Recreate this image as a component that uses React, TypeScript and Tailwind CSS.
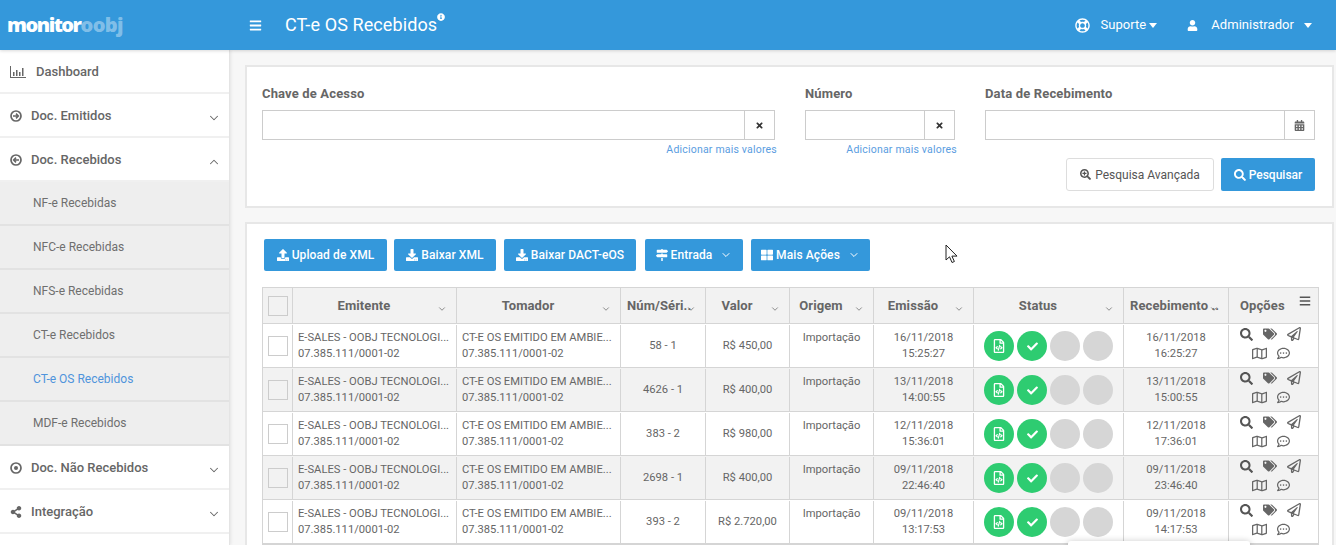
import { ReactNode } from "react";
import {
  FaBars,
  FaCalendarAlt,
  FaCheck,
  FaDownload,
  FaInfoCircle,
  FaMapSigns,
  FaRegCommentDots,
  FaRegFileCode,
  FaRegLifeRing,
  FaRegMap,
  FaRegPaperPlane,
  FaSearch,
  FaSearchPlus,
  FaShareAlt,
  FaTags,
  FaThLarge,
  FaTimes,
  FaUpload,
  FaUser,
} from "react-icons/fa";
import { FiChevronDown, FiChevronUp } from "react-icons/fi";

const gridCols = "grid grid-cols-[29px_164px_164px_85px_84px_84px_100px_150px_105px_90px]";

const subItems = [
  "NF-e Recebidas",
  "NFC-e Recebidas",
  "NFS-e Recebidas",
  "CT-e Recebidos",
  "CT-e OS Recebidos",
  "MDF-e Recebidos",
];

const rows = [
  { num: "58 - 1", valor: "R$ 450,00", em: ["16/11/2018", "15:25:27"], rec: ["16/11/2018", "16:25:27"] },
  { num: "4626 - 1", valor: "R$ 400,00", em: ["13/11/2018", "14:00:55"], rec: ["13/11/2018", "15:00:55"] },
  { num: "383 - 2", valor: "R$ 980,00", em: ["12/11/2018", "15:36:01"], rec: ["12/11/2018", "17:36:01"] },
  { num: "2698 - 1", valor: "R$ 400,00", em: ["09/11/2018", "22:46:40"], rec: ["09/11/2018", "23:46:40"] },
  { num: "393 - 2", valor: "R$ 2.720,00", em: ["09/11/2018", "13:17:53"], rec: ["09/11/2018", "14:17:53"] },
];

function CircleIcon({ children }: { children: ReactNode }) {
  return (
    <svg width="12" height="12" viewBox="0 0 12 12" fill="none" stroke="#666">
      <circle cx="6" cy="6" r="5" strokeWidth="1.7" />
      {children}
    </svg>
  );
}

function NavItem({ icon, label, open }: { icon: ReactNode; label: string; open?: boolean }) {
  return (
    <div className="flex h-11 items-center border-b-2 border-[#f0f0f0] pl-[10px] pr-[8px] pt-[2px] text-[13px] font-medium text-[#666]">
      <span className="w-[21px]">{icon}</span>
      <span className="flex-1">{label}</span>
      {open ? (
        <FiChevronUp strokeWidth={1.8} className="mt-1 text-[14px]" />
      ) : (
        <FiChevronDown strokeWidth={1.8} className="mt-1 text-[14px]" />
      )}
    </div>
  );
}

function Sidebar() {
  return (
    <aside className="w-[230px] shrink-0 border-r border-[#e4e4e4] bg-white shadow-[1px_0_3px_rgba(0,0,0,0.08)]">
      <div className="flex h-11 items-center border-b-2 border-[#f0f0f0] pl-[10px] pt-[2px] text-[13px] font-medium text-[#666]">
        <svg className="mr-[10px]" width="16" height="12" viewBox="0 0 16 12" fill="#666">
          <path d="M0 0h1v11h15v1H0z" />
          <path d="M3 6h1.5v4H3zM6 4h1.5v6H6zM9 6h1.5v4H9zM12 2h1.5v8H12z" />
        </svg>
        <span>Dashboard</span>
      </div>
      <NavItem
        icon={
          <CircleIcon>
            <path d="M3 6h5M6 3.6 8.4 6 6 8.4" strokeWidth="1.5" />
          </CircleIcon>
        }
        label="Doc. Emitidos"
      />
      <NavItem
        icon={
          <CircleIcon>
            <path d="M9 6H4M6 3.6 3.6 6 6 8.4" strokeWidth="1.5" />
          </CircleIcon>
        }
        label="Doc. Recebidos"
        open
      />
      {subItems.map((item) => (
        <div
          key={item}
          className={`flex h-11 items-center border-b-2 border-[#e2e2e2] bg-[#eeeeee] pl-[33px] text-[12px] ${
            item === "CT-e OS Recebidos" ? "text-[#4f94dc]" : "text-[#6f6f6f]"
          }`}
        >
          {item}
        </div>
      ))}
      <NavItem
        icon={
          <CircleIcon>
            <circle cx="6" cy="6" r="2" fill="#666" stroke="none" />
          </CircleIcon>
        }
        label="Doc. Não Recebidos"
      />
      <NavItem icon={<FaShareAlt className="text-[12px]" />} label="Integração" />
    </aside>
  );
}

function Header() {
  return (
    <header className="relative z-10 flex h-[50px] items-center bg-[#3498db] text-white shadow-[0_1px_3px_rgba(0,0,0,0.15)]">
      <div className="w-[249px] pl-[7px] text-[20px] font-extrabold leading-none tracking-[-1.5px] font-['Open_Sans',sans-serif]">
        monitor<span className="tracking-[-0.6px] text-white/40">oobj</span>
      </div>
      <FaBars className="text-[13px]" />
      <div className="ml-[23px] flex flex-1 items-start pb-[2px] text-[18px] tracking-[0.1px]">
        CT-e OS Recebidos
        <FaInfoCircle className="mt-[2px] text-[8px]" />
      </div>
      <div className="flex items-center text-[13px] tracking-[0.05px]">
        <FaRegLifeRing className="mr-[10px] text-[15px]" />
        Suporte
        <span className="ml-[3px] border-x-[4.5px] border-t-[5px] border-x-transparent border-t-white" />
        <FaUser className="ml-[30px] mr-[13px] text-[11px]" />
        Administrador
        <span className="ml-[10px] mr-[24px] border-x-[4.5px] border-t-[5px] border-x-transparent border-t-white" />
      </div>
    </header>
  );
}

function FilterInput({ label, width, hint }: { label: string; width: string; hint?: boolean }) {
  return (
    <div className={width}>
      <label className="mb-2 block text-[13px] font-bold leading-[17px] tracking-[0.15px] text-[#666]">{label}</label>
      <div className="flex h-[30px] border border-[#ccc] bg-white">
        <div className="flex-1" />
        <div className="flex w-[30px] items-center justify-center border-l border-[#ccc] text-[9px] text-[#333]">
          {hint ? <FaTimes /> : <FaCalendarAlt className="text-[11px] text-[#666]" />}
        </div>
      </div>
      {hint && (
        <div className="-mr-[2px] mt-[3px] text-right text-[10.5px] leading-[14px] tracking-[0.2px] text-[#5a9ddf]">
          Adicionar mais valores
        </div>
      )}
    </div>
  );
}

function FilterPanel() {
  return (
    <section className="h-[143px] border-2 border-[#e7e7e7] bg-white pl-[15px] pr-[17px] pt-[18px]">
      <div className="flex gap-[30px]">
        <FilterInput label="Chave de Acesso" width="w-[513px]" hint />
        <FilterInput label="Número" width="w-[150px]" hint />
        <FilterInput label="Data de Recebimento" width="w-[330px]" />
      </div>
      <div className="mt-[1px] flex justify-end gap-[7px]">
        <button className="flex h-[33px] w-[148px] items-center justify-center gap-1 rounded-[3px] border border-[#ddd] bg-white text-[12px] text-[#555]">
          <FaSearchPlus className="text-[11px]" /> Pesquisa Avançada
        </button>
        <button className="flex h-[33px] w-[94px] items-center justify-center gap-[3px] rounded-[2px] bg-[#3498db] text-[12px] font-medium text-white">
          <FaSearch className="text-[12px]" /> Pesquisar
        </button>
      </div>
    </section>
  );
}

function ActionButton({ icon, label, className, caret }: { icon: ReactNode; label: string; className: string; caret?: boolean }) {
  return (
    <button className={`flex h-8 items-center justify-center gap-[3px] rounded-[2px] bg-[#3498db] text-[12px] font-medium tracking-[0.1px] text-white ${className}`}>
      <span className="text-[12px]">{icon}</span>
      {label}
      {caret && <FiChevronDown className="ml-[5px] text-[12px]" />}
    </button>
  );
}

function Checkbox() {
  return <div className="h-5 w-5 border border-[#ccc]" />;
}

function HeaderCell({ label, wide }: { label: string; wide?: boolean }) {
  return (
    <div className="relative flex items-center border-l border-[#d5d5d5] text-[13px] font-bold tracking-[0.1px] text-[#666]">
      {wide ? (
        <span className="whitespace-nowrap pl-[6px]">{label}</span>
      ) : (
        <span className="w-full pl-[5px] pr-[26px] text-center">{label}</span>
      )}
      <FiChevronDown className="absolute right-[9px] top-[16px] text-[10px] text-[#777]" />
    </div>
  );
}

function StatusDot({ children }: { children?: ReactNode }) {
  return (
    <div
      className={`flex h-[30px] w-[30px] items-center justify-center rounded-full text-white ${
        children ? "bg-[#2ecc71]" : "bg-[#d6d6d6]"
      }`}
    >
      {children}
    </div>
  );
}

function Row({ row, striped }: { row: (typeof rows)[number]; striped: boolean }) {
  const cell = "flex flex-col items-center justify-center border-l border-[#d5d5d5] leading-4";
  return (
    <div className={`${gridCols} h-11 border-b border-[#d5d5d5] pt-px text-[11.2px] text-[#666] ${striped ? "bg-[#f2f2f2]" : "bg-white"}`}>
      <div className="flex items-center justify-center">
        <Checkbox />
      </div>
      {["E-SALES - OOBJ TECNOLOGI...", "CT-E OS EMITIDO EM AMBIE..."].map((name) => (
        <div key={name} className="flex flex-col justify-center border-l border-[#d5d5d5] pl-[5px] leading-4">
          <span className="whitespace-nowrap">{name}</span>
          <span>07.385.111/0001-02</span>
        </div>
      ))}
      <div className={cell}>{row.num}</div>
      <div className={cell}>{row.valor}</div>
      <div className="border-l border-[#d5d5d5] pt-[5px] text-center leading-4">Importação</div>
      <div className={cell}>
        <span>{row.em[0]}</span>
        <span>{row.em[1]}</span>
      </div>
      <div className="flex items-center justify-center gap-[3px] border-l border-[#d5d5d5]">
        <StatusDot>
          <FaRegFileCode className="text-[14px]" />
        </StatusDot>
        <StatusDot>
          <FaCheck className="text-[11px]" />
        </StatusDot>
        <StatusDot />
        <StatusDot />
      </div>
      <div className={cell}>
        <span>{row.rec[0]}</span>
        <span>{row.rec[1]}</span>
      </div>
      <div className="flex flex-col items-center gap-[5px] border-l border-[#d5d5d5] pr-[6px] pt-[2px] text-[14px] text-[#666]">
        <div className="flex items-center gap-[10px]">
          <FaSearch className="text-[13px] text-[#555]" />
          <FaTags />
          <FaRegPaperPlane />
        </div>
        <div className="flex items-center gap-[10px]">
          <FaRegMap className="text-[15px]" />
          <FaRegCommentDots className="text-[13px]" />
        </div>
      </div>
    </div>
  );
}

function TablePanel() {
  return (
    <section className="mt-[14px] border-2 border-b-0 border-[#e7e7e7] bg-white pl-[15px] pr-[13px] pt-[15px]">
      <div className="flex">
        <ActionButton icon={<FaUpload />} label="Upload de XML" className="ml-[2px] w-[123px]" />
        <ActionButton icon={<FaDownload />} label="Baixar XML" className="ml-[7px] w-[102px]" />
        <ActionButton icon={<FaDownload />} label="Baixar DACT-eOS" className="ml-2 w-[132px]" />
        <ActionButton icon={<FaMapSigns />} label="Entrada" className="ml-[9px] w-[98px]" caret />
        <ActionButton icon={<FaThLarge />} label="Mais Ações" className="ml-2 w-[119px]" caret />
      </div>
      <div className="mt-4 border border-[#d5d5d5]">
        <div className={`${gridCols} h-9 border-b border-[#d5d5d5] bg-[#f2f2f2]`}>
          <div className="flex items-center justify-center">
            <Checkbox />
          </div>
          <HeaderCell label="Emitente" />
          <HeaderCell label="Tomador" />
          <HeaderCell label="Núm/Séri.." wide />
          <HeaderCell label="Valor" />
          <HeaderCell label="Origem" />
          <HeaderCell label="Emissão" />
          <HeaderCell label="Status" />
          <HeaderCell label="Recebimento .." wide />
          <div className="relative flex items-center border-l border-[#d5d5d5] pl-[11px] text-[13px] font-bold tracking-[0.1px] text-[#666]">
            Opções
            <FaBars className="absolute right-[7px] top-[7px] text-[12px] text-[#555]" />
          </div>
        </div>
        {rows.map((row, i) => (
          <Row key={row.num} row={row} striped={i % 2 === 1} />
        ))}
      </div>
    </section>
  );
}

export default function App() {
  return (
    <div className="relative h-[545px] w-[1336px] overflow-hidden bg-[#f7f7f7] font-['Roboto',sans-serif]">
      <Header />
      <div className="flex">
        <Sidebar />
        <main className="flex-1 pl-[15px] pr-[2px] pt-[15px]">
          <FilterPanel />
          <TablePanel />
        </main>
      </div>
      {/* cursor */}
      <svg className="absolute left-[945px] top-[244px]" width="13" height="20" viewBox="0 0 13 20">
        <path d="M1 1v15l3.5-3.2L7 18.5l2.4-1-2.5-5.4H12z" fill="#fff" stroke="#222" strokeWidth="1" />
      </svg>
      {/* tooltip peeking from below the fold */}
      <div className="absolute left-[1068px] top-[541px] h-10 w-[182px] rounded-[3px] bg-white shadow-[0_0_6px_rgba(0,0,0,0.2)]" />
    </div>
  );
}
